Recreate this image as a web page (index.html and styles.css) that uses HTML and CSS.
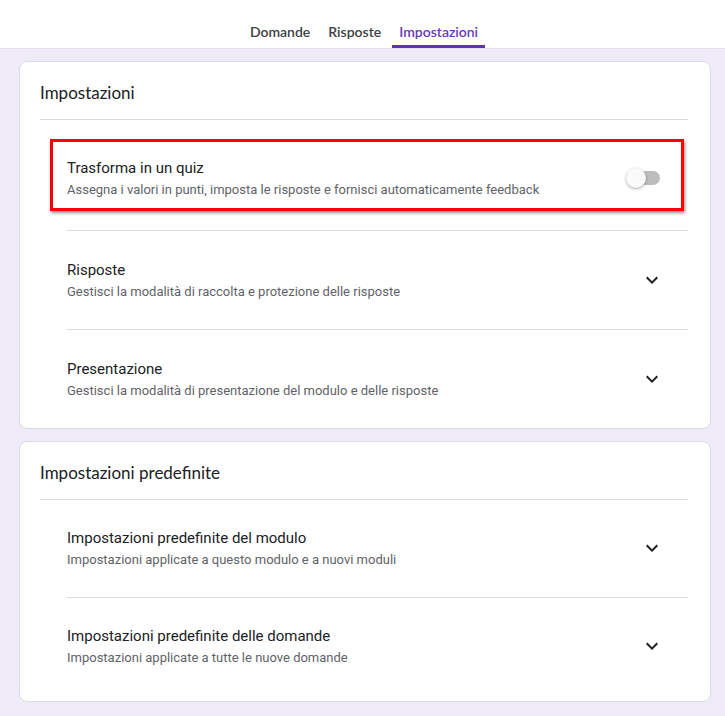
FILE: index.html
```html
<!DOCTYPE html>
<html lang="it">
<head>
<meta charset="utf-8">
<title>Impostazioni</title>
<link rel="stylesheet" href="styles.css">
</head>
<body>
<header class="topbar">
  <nav class="tabs">
    <a class="tab">Domande</a>
    <a class="tab">Risposte</a>
    <a class="tab tab-active">Impostazioni</a>
  </nav>
</header>
<main class="page">
  <section class="card">
    <h2 class="card-title">Impostazioni</h2>
    <div class="rows">
      <div class="row row-quiz">
        <div class="row-text">
          <div class="row-title">Trasforma in un quiz</div>
          <div class="row-sub">Assegna i valori in punti, imposta le risposte e fornisci automaticamente feedback</div>
        </div>
        <div class="toggle"><span class="track"></span><span class="thumb"></span></div>
        <div class="highlight"></div>
      </div>
      <div class="row">
        <div class="row-text">
          <div class="row-title">Risposte</div>
          <div class="row-sub">Gestisci la modalità di raccolta e protezione delle risposte</div>
        </div>
        <svg class="chev" viewBox="0 0 24 24" width="24" height="24"><path d="M16.59 8.59L12 13.17 7.41 8.59 6 10l6 6 6-6z"/></svg>
      </div>
      <div class="row">
        <div class="row-text">
          <div class="row-title">Presentazione</div>
          <div class="row-sub">Gestisci la modalità di presentazione del modulo e delle risposte</div>
        </div>
        <svg class="chev" viewBox="0 0 24 24" width="24" height="24"><path d="M16.59 8.59L12 13.17 7.41 8.59 6 10l6 6 6-6z"/></svg>
      </div>
    </div>
  </section>
  <section class="card card-defaults">
    <h2 class="card-title">Impostazioni predefinite</h2>
    <div class="rows">
      <div class="row">
        <div class="row-text">
          <div class="row-title">Impostazioni predefinite del modulo</div>
          <div class="row-sub">Impostazioni applicate a questo modulo e a nuovi moduli</div>
        </div>
        <svg class="chev" viewBox="0 0 24 24" width="24" height="24"><path d="M16.59 8.59L12 13.17 7.41 8.59 6 10l6 6 6-6z"/></svg>
      </div>
      <div class="row">
        <div class="row-text">
          <div class="row-title">Impostazioni predefinite delle domande</div>
          <div class="row-sub">Impostazioni applicate a tutte le nuove domande</div>
        </div>
        <svg class="chev" viewBox="0 0 24 24" width="24" height="24"><path d="M16.59 8.59L12 13.17 7.41 8.59 6 10l6 6 6-6z"/></svg>
      </div>
    </div>
  </section>
</main>
</body>
</html>
```

FILE: styles.css
```css
html, body {
  margin: 0;
  padding: 0;
  background: #f0ebf8;
  font-family: Roboto, "Liberation Sans", Arial, sans-serif;
  color: #202124;
}

.topbar {
  background: #fff;
  height: 48px;
  border-bottom: 1px solid #e4e0ec;
  display: flex;
  justify-content: center;
}

.tabs {
  display: flex;
  gap: 4px;
  margin-left: 3px;
}

.tab {
  box-sizing: border-box;
  height: 48px;
  padding: 22px 7px 0;
  font-family: Lato, Roboto, sans-serif;
  font-size: 14px;
  line-height: 20px;
  font-weight: 600;
  color: #3c4043;
  border-bottom: 3px solid transparent;
}

.tab-active {
  color: #673ab7;
  border-bottom-color: #5e35b1;
}

.page {
  padding: 12px 14px 13px 19px;
  display: flex;
  flex-direction: column;
  gap: 12px;
}

.card {
  background: #fff;
  border: 1px solid #dadce0;
  border-radius: 8px;
  padding: 0 22px 0 20px;
}

.card-title {
  margin: 0;
  padding-top: 19px;
  padding-bottom: 14px;
  font-family: Lato, Roboto, sans-serif;
  font-size: 17px;
  line-height: 24px;
  font-weight: 400;
  color: #202124;
  border-bottom: 1px solid #dadce0;
}

.rows {
  padding-left: 27px;
}

.row {
  position: relative;
  display: flex;
  align-items: center;
  padding: 27px 0;
  border-bottom: 1px solid #dadce0;
}

.row:last-child {
  border-bottom: none;
}

.row-quiz {
  padding: 36px 0 30px;
}

.card-defaults .row {
  padding: 26px 0 27px;
}

.card-defaults .row:last-child {
  padding-bottom: 33px;
}

.row-text {
  flex: 1;
  min-width: 0;
}

.row-title {
  font-size: 15px;
  line-height: 24px;
  color: #202124;
}

.row-sub {
  font-size: 13px;
  line-height: 20px;
  color: #5f6368;
}

.chev {
  flex: none;
  margin-right: 24px;
  fill: #202124;
}

.toggle {
  position: relative;
  flex: none;
  width: 34px;
  height: 20px;
  margin-right: 28px;
}

.track {
  position: absolute;
  left: 12px;
  top: 3px;
  width: 22px;
  height: 14px;
  border-radius: 7px;
  background: #bdbdbd;
}

.thumb {
  position: absolute;
  left: 0;
  top: 0;
  width: 20px;
  height: 20px;
  border-radius: 50%;
  background: #fafafa;
  box-shadow: 0 1px 3px rgba(0, 0, 0, 0.35);
}

.highlight {
  position: absolute;
  left: -17px;
  top: 19px;
  width: 634px;
  height: 72px;
  box-sizing: border-box;
  border: 3px solid #ff0000;
  box-shadow: 1px 2px 3px rgba(0, 0, 0, 0.45);
  pointer-events: none;
}
```
